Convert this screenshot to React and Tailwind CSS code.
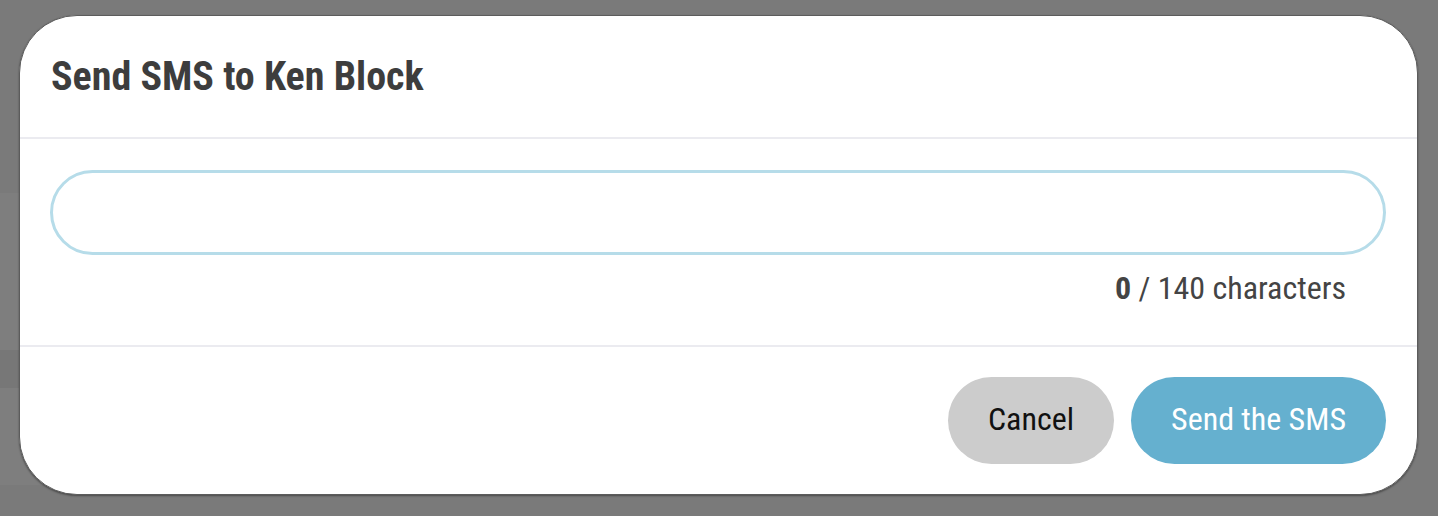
import React, { useState } from "react";

const font = { fontFamily: '"Roboto Condensed", Roboto, "Liberation Sans", sans-serif' };

export default function App() {
  const [message, setMessage] = useState("");
  const max = 140;

  return (
    <div className="relative w-[1438px] h-[516px] overflow-hidden bg-[#7a7a7a]" style={font}>
      {/* dimmed page behind the dialog */}
      <div className="flex flex-col w-[400px]">
        <div className="h-[193px] bg-[#7a7a7a]" />
        <div className="h-[157px] bg-[#7e7e7e]" />
        <div className="h-[38px] bg-[#777777]" />
        <div className="h-[97px] bg-[#7e7e7e]" />
      </div>

      <div className="absolute left-[19px] top-[15px] w-[1399px] h-[480px] flex flex-col bg-white rounded-[58px] border border-[#5c5c5c] shadow-[0_1px_2px_rgba(0,0,0,0.4)] overflow-hidden">
        <div className="h-[121px] flex items-center pl-[31px] pt-[1px]">
          <h2 className="text-[40px] font-bold text-[#3d3d3d] leading-none">
            Send SMS to Ken Block
          </h2>
        </div>
        <div className="h-[2px] bg-[#ebebf0]" />

        <div className="flex flex-col pl-[30px] pr-[31px] pt-[31px] h-[206px]">
          <input
            type="text"
            value={message}
            maxLength={max}
            onChange={(e) => setMessage(e.target.value)}
            className="h-[85px] w-full rounded-full border-[3px] border-[#b6dce9] px-8 text-[28px] text-[#333] outline-none"
          />
          <div className="flex justify-end pr-[40px] mt-[17px] text-[32px] text-[#444] leading-none">
            <span>
              <b className="font-bold">{message.length}</b> / {max} characters
            </span>
          </div>
        </div>
        <div className="h-[2px] bg-[#ebebf0]" />

        <div className="flex justify-end gap-[17px] pt-[30px] pr-[31px]">
          <button className="h-[87px] w-[166px] pb-[4px] rounded-full bg-[#cccccc] text-[32px] text-[#111]">
            Cancel
          </button>
          <button className="h-[87px] w-[255px] pb-[4px] rounded-full bg-[#65b0cf] text-[32px] text-white">
            Send the SMS
          </button>
        </div>
      </div>
    </div>
  );
}
